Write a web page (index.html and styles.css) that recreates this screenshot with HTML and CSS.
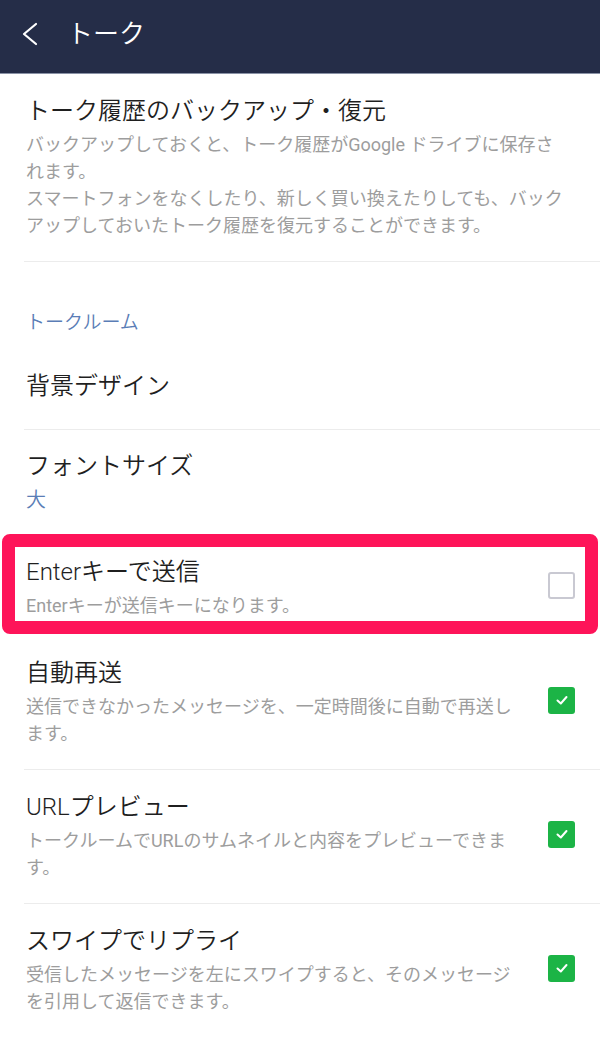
FILE: index.html
```html
<!DOCTYPE html>
<html lang="ja">
<head>
<meta charset="utf-8">
<title>トーク</title>
<link rel="stylesheet" href="styles.css">
</head>
<body>
<header class="appbar">
  <svg class="back" width="18" height="24" viewBox="0 0 18 24" aria-hidden="true">
    <polyline points="15,2 3,12 15,22" fill="none" stroke="#ffffff" stroke-width="2.2" stroke-linecap="round" stroke-linejoin="round"/>
  </svg>
  <h1 class="appbar-title">トーク</h1>
</header>

<main class="list">
  <div class="row">
    <div class="row-text wide">
      <div class="row-title">トーク履歴のバックアップ・復元</div>
      <div class="row-desc">バックアップしておくと、トーク履歴がGoogle ドライブに保存されます。<br>スマートフォンをなくしたり、新しく買い換えたりしても、バックアップしておいたトーク履歴を復元することができます。</div>
    </div>
  </div>

  <div class="section-head">トークルーム</div>

  <div class="row single">
    <div class="row-text">
      <div class="row-title">背景デザイン</div>
    </div>
  </div>

  <div class="row value-row">
    <div class="row-text">
      <div class="row-title">フォントサイズ</div>
      <div class="row-value">大</div>
    </div>
  </div>

  <div class="highlight">
    <div class="row-text">
      <div class="row-title">Enterキーで送信</div>
      <div class="row-desc">Enterキーが送信キーになります。</div>
    </div>
    <span class="check off"></span>
  </div>

  <div class="row">
    <div class="row-text">
      <div class="row-title">自動再送</div>
      <div class="row-desc">送信できなかったメッセージを、一定時間後に自動で再送します。</div>
    </div>
    <span class="check on"><svg width="14" height="12" viewBox="0 0 14 12"><polyline points="2.5,6.5 5.8,9.5 11.5,3" fill="none" stroke="#fff" stroke-width="2" stroke-linecap="round" stroke-linejoin="round"/></svg></span>
  </div>

  <div class="row">
    <div class="row-text">
      <div class="row-title">URLプレビュー</div>
      <div class="row-desc">トークルームでURLのサムネイルと内容をプレビューできます。</div>
    </div>
    <span class="check on"><svg width="14" height="12" viewBox="0 0 14 12"><polyline points="2.5,6.5 5.8,9.5 11.5,3" fill="none" stroke="#fff" stroke-width="2" stroke-linecap="round" stroke-linejoin="round"/></svg></span>
  </div>

  <div class="row">
    <div class="row-text">
      <div class="row-title">スワイプでリプライ</div>
      <div class="row-desc">受信したメッセージを左にスワイプすると、そのメッセージを引用して返信できます。</div>
    </div>
    <span class="check on"><svg width="14" height="12" viewBox="0 0 14 12"><polyline points="2.5,6.5 5.8,9.5 11.5,3" fill="none" stroke="#fff" stroke-width="2" stroke-linecap="round" stroke-linejoin="round"/></svg></span>
  </div>
</main>
</body>
</html>
```

FILE: styles.css
```css
* { box-sizing: border-box; }

html, body {
  margin: 0;
  padding: 0;
  background: #ffffff;
}

body {
  font-family: Roboto, "Noto Sans CJK JP", "Noto Sans", sans-serif;
  font-weight: 350;
  color: #1f1f1f;
  width: 600px;
  overflow: hidden;
}

.appbar {
  height: 74px;
  background: #252d48;
  border-bottom: 1px solid #8a92a6;
  display: flex;
  align-items: center;
  padding: 0 0 6px 21px;
  gap: 28px;
}

.back { display: block; flex: none; }

.appbar-title {
  margin: 0;
  font-size: 26px;
  font-weight: 350;
  color: #ffffff;
  line-height: 36px;
}

.list { display: flex; flex-direction: column; }

.row {
  margin-left: 24px;
  padding: 17px 25px 22px 2px;
  border-bottom: 1px solid #ececec;
  display: flex;
  align-items: center;
  gap: 22px;
}

.row.single { padding-top: 24px; padding-bottom: 23px; }

.row.value-row { padding-top: 16px; padding-bottom: 20px; border-bottom: none; }

.row-text { flex: 1; min-width: 0; }

.row-text.wide { padding-right: 4px; }

.row-title {
  font-size: 24px;
  line-height: 40px;
  color: #1f1f1f;
}

.row-desc {
  font-size: 18px;
  font-weight: 400;
  line-height: 27px;
  color: #9d9d9d;
}

.row-value {
  font-size: 20px;
  line-height: 28px;
  color: #5a7db6;
}

.section-head {
  padding: 48px 0 6px 26px;
  font-size: 19px;
  line-height: 26px;
  color: #5a7db6;
}

.highlight {
  margin: 0 2px 2px 2px;
  border: 13px solid #fe1459;
  border-radius: 8px;
  padding: 5px 10px 2px 11px;
  display: flex;
  align-items: center;
  gap: 19px;
}

.check {
  flex: none;
  width: 27px;
  height: 27px;
  border-radius: 3px;
  display: flex;
  align-items: center;
  justify-content: center;
}

.check.off {
  border: 2px solid #c9c9d2;
  background: #ffffff;
}

.check.on {
  background: #1cb446;
}

.check svg { display: block; }
```
